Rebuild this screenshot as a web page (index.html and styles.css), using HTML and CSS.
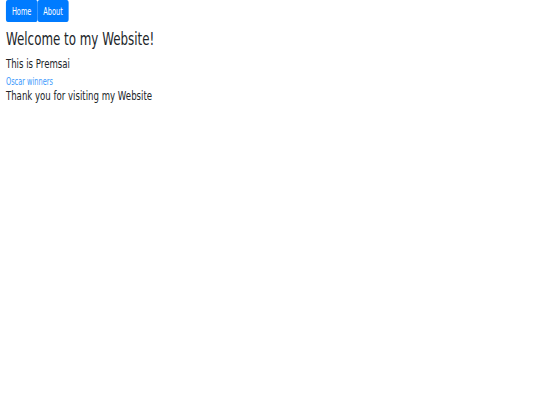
FILE: index.html
```html
<!DOCTYPE html>
<html>
<head>
<meta charset="utf-8">
<link rel="stylesheet" href="styles.css">
</head>
<body>
<div class="page">
  <nav class="nav">
    <a class="btn" href="#">Home</a><a class="btn" href="#">About</a>
  </nav>
  <h1 class="title">Welcome to my Website!</h1>
  <p class="intro">This is Premsai</p>
  <a class="link" href="#">Oscar winners</a>
  <p class="thanks">Thank you for visiting my Website</p>
</div>
</body>
</html>
```
FILE: styles.css
```css
html, body { margin: 0; padding: 0; background: #fff; }
body {
  font-family: "DejaVu Sans", sans-serif;
  color: #212529;
}
.page {
  padding: 0 9px;
  transform: scaleX(0.66);
  transform-origin: 0 0;
}
.nav { display: flex; height: 22px; }
.btn {
  display: flex;
  align-items: center;
  justify-content: center;
  background: #007bff;
  color: #fff;
  text-decoration: none;
  font-size: 10px;
  padding: 0 9px;
  border-radius: 3px;
}
.title { font-size: 18px; font-weight: normal; margin: 5px 0 0; line-height: 24px; }
.intro { font-size: 13px; margin: 5px 0 0; line-height: 16px; }
.link { display: block; font-size: 10px; color: #3b99fc; text-decoration: none; margin-top: 3px; line-height: 13px; }
.thanks { font-size: 13px; margin: 0; line-height: 15px; }
```
